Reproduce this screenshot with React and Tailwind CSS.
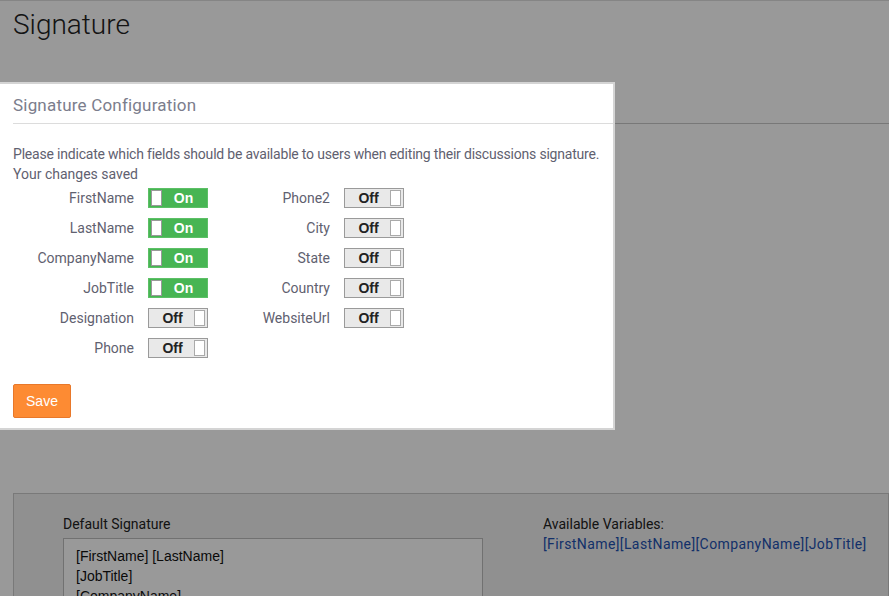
import { useState } from 'react';

const LEFT = [
  ['FirstName', true],
  ['LastName', true],
  ['CompanyName', true],
  ['JobTitle', true],
  ['Designation', false],
  ['Phone', false],
];

const RIGHT = [
  ['Phone2', false],
  ['City', false],
  ['State', false],
  ['Country', false],
  ['WebsiteUrl', false],
];

function Toggle({ on, onClick }) {
  if (on) {
    return (
      <button
        type="button"
        onClick={onClick}
        className="flex h-[20px] w-[60px] items-center border border-[#5cc066] bg-[#47b553] px-[2px] font-['Liberation_Sans',Arial,sans-serif] text-[14px] font-bold text-white"
      >
        <span className="h-[16px] w-[11px] border border-[#999] bg-white" />
        <span className="flex-1 text-center leading-none">On</span>
      </button>
    );
  }
  return (
    <button
      type="button"
      onClick={onClick}
      className="flex h-[20px] w-[60px] items-center border border-[#9a9a9a] bg-[#e9e9e9] px-[2px] font-['Liberation_Sans',Arial,sans-serif] text-[14px] font-bold text-[#222]"
    >
      <span className="flex-1 text-center leading-none">Off</span>
      <span className="h-[16px] w-[11px] border border-[#aaa] bg-white" />
    </button>
  );
}

function FieldRow({ label, on, onToggle, labelWidth }) {
  return (
    <div className="flex h-[30px] items-center">
      <span className={`${labelWidth} pr-[14px] text-right`}>{label}</span>
      <Toggle on={on} onClick={onToggle} />
    </div>
  );
}

export default function App() {
  const [fields, setFields] = useState(() => Object.fromEntries([...LEFT, ...RIGHT]));
  const flip = (name) => setFields((f) => ({ ...f, [name]: !f[name] }));

  return (
    <div className="relative h-[596px] w-full overflow-hidden bg-white font-['Roboto',sans-serif]">
      {/* page underneath */}
      <div className="border-t border-[#dedede]">
        <h1 className="px-[13px] pt-[8px] text-[28px] font-light leading-[32px] text-[#222]">Signature</h1>
        <div className="mt-[82px] border-b border-[#c8c8c8]" />
        <div className="ml-[13px] mt-[369px] h-[200px] border border-[#cacaca] bg-[#f1f1f1]">
          <div className="flex pt-[20px]">
            <div className="ml-[49px] w-[420px]">
              <div className="text-[14px] text-[#222]">Default Signature</div>
              <div className="mt-[3px] h-[80px] border border-[#bdbdbd] bg-white px-[12px] py-[7px] font-['Liberation_Sans',Arial,sans-serif] text-[14px] leading-[20px] text-[#111]">
                <div>[FirstName] [LastName]</div>
                <div>[JobTitle]</div>
                <div>[CompanyName]</div>
              </div>
            </div>
            <div className="ml-[60px]">
              <div className="text-[14px] leading-[20px] text-[#222]">Available Variables:</div>
              <div className="text-[14px] leading-[20px] tracking-[0.4px] text-[#2250b0]">
                [FirstName][LastName][CompanyName][JobTitle]
              </div>
            </div>
          </div>
        </div>
      </div>

      {/* dim overlay */}
      <div className="absolute inset-0 bg-black/40" />

      {/* dialog */}
      <div className="absolute left-0 top-[82px] w-[615px] border-2 border-l-0 border-[#d4d4d4] bg-white">
        <div className="ml-[13px] border-b border-[#dcdcdc] pb-[8px] pt-[11px] text-[17px] leading-[20px] tracking-[0.2px] text-[#7b7d8c]">
          Signature Configuration
        </div>
        <div className="px-[13px] pt-[20px] text-[14px] leading-[20px] text-[#5f6170]">
          <p className="tracking-[-0.2px]">
            Please indicate which fields should be available to users when editing their discussions signature.
          </p>
          <p>Your changes saved</p>
          <div className="-mt-[1px] flex">
            <div className="flex flex-col">
              {LEFT.map(([name]) => (
                <FieldRow
                  key={name}
                  label={name}
                  on={fields[name]}
                  onToggle={() => flip(name)}
                  labelWidth="w-[135px]"
                />
              ))}
            </div>
            <div className="ml-[19px] flex flex-col">
              {RIGHT.map(([name]) => (
                <FieldRow
                  key={name}
                  label={name}
                  on={fields[name]}
                  onToggle={() => flip(name)}
                  labelWidth="w-[117px]"
                />
              ))}
            </div>
          </div>
        </div>
        <div className="px-[13px] pb-[10px] pt-[21px]">
          <button
            type="button"
            className="h-[34px] w-[58px] rounded-[2px] border border-[#e8782a] bg-[#fd8b33] font-['Liberation_Sans',Arial,sans-serif] text-[14px] text-white"
          >
            Save
          </button>
        </div>
      </div>
    </div>
  );
}
